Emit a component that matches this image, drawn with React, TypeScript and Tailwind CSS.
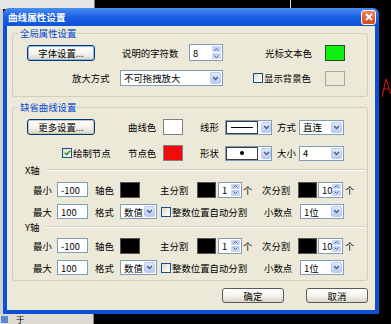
import type { ReactNode } from 'react';

type P = { className?: string; children?: ReactNode };

function Txt({ className = '', children }: P) {
    return <span className={`shrink-0 whitespace-nowrap leading-[12px] ${className}`}>{children}</span>;
}

function Chevron() {
    return (
        <svg width="7" height="5" viewBox="0 0 7 5">
            <path d="M1 1 L3.5 3.5 L6 1" fill="none" stroke="#4d6185" strokeWidth="1.5" />
        </svg>
    );
}

function XpButton({ className = '', children }: P) {
    return (
        <div className={`flex shrink-0 items-center justify-center rounded-[3px] border border-[#003c74] bg-linear-to-b from-white via-[#f5f4ef] to-[#d9d5c8] leading-[12px] ${className}`}>
            {children}
        </div>
    );
}

function Select({ className = '', value }: { className?: string; value: string }) {
    return (
        <div className={`flex shrink-0 items-stretch border border-[#7f9db9] bg-white p-[1px] ${className}`}>
            <span className="flex flex-1 items-center pl-[2px] leading-[12px] whitespace-nowrap">{value}</span>
            <span className="flex w-[11px] items-center justify-center rounded-[2px] border border-[#b9cbf3] bg-linear-to-b from-[#e1eafd] to-[#b7cbf7]">
                <Chevron />
            </span>
        </div>
    );
}

function Spin({ className = '', value }: { className?: string; value: string }) {
    return (
        <div className={`flex shrink-0 items-stretch border border-[#7f9db9] bg-white p-[1px] ${className}`}>
            <span className="flex flex-1 items-center pl-[2px] leading-[12px]">{value}</span>
            <span className="flex w-[9px] flex-col gap-[1px]">
                <span className="flex flex-1 items-center justify-center rounded-[1px] bg-[#c6d4f7]">
                    <svg width="5" height="3" viewBox="0 0 5 3">
                        <path d="M0.5 2.5 L2.5 0.5 L4.5 2.5" fill="none" stroke="#4d6185" strokeWidth="1" />
                    </svg>
                </span>
                <span className="flex flex-1 items-center justify-center rounded-[1px] bg-[#c6d4f7]">
                    <svg width="5" height="3" viewBox="0 0 5 3">
                        <path d="M0.5 0.5 L2.5 2.5 L4.5 0.5" fill="none" stroke="#4d6185" strokeWidth="1" />
                    </svg>
                </span>
            </span>
        </div>
    );
}

function TextBox({ className = '', value }: { className?: string; value: string }) {
    return (
        <div className={`flex shrink-0 items-center border border-[#7f9db9] bg-white pl-[3px] leading-[12px] ${className}`}>
            {value}
        </div>
    );
}

function StyleCombo({ children }: P) {
    return (
        <div className="flex h-[15px] w-[47px] shrink-0 items-stretch gap-[3px] border border-[#7f9db9] bg-white">
            <span className="flex w-[33px] items-center justify-center border border-[#3a3a3a]">{children}</span>
            <span className="my-[1px] flex w-[10px] items-center justify-center rounded-[2px] border border-[#b9cbf3] bg-linear-to-b from-[#e1eafd] to-[#b7cbf7]">
                <Chevron />
            </span>
        </div>
    );
}

function Check({ checked = false, className = '' }: { checked?: boolean; className?: string }) {
    return (
        <span className={`flex h-[10px] w-[10px] shrink-0 items-center justify-center border border-[#1c5180] bg-linear-to-br from-[#dcdcd7] to-white ${className}`}>
            {checked && (
                <svg width="7" height="6" viewBox="0 0 7 6">
                    <path d="M0.8 2.8 L2.6 4.6 L6.2 0.8" fill="none" stroke="#21a121" strokeWidth="1.6" />
                </svg>
            )}
        </span>
    );
}

function Group({ label, className = '', children }: { label: string; className?: string; children: ReactNode }) {
    return (
        <div className={`relative ml-[5px] mr-[7px] rounded-[3px] border border-[#d0d0bf] ${className}`}>
            <span className="absolute left-[6px] top-[-7px] bg-[#ece9d8] px-[1px] leading-[12px] text-[#0046d5]">{label}</span>
            {children}
        </div>
    );
}

function AxisSep({ label }: { label: string }) {
    return (
        <div className="flex h-[12px] items-center">
            <Txt className="ml-[12px] w-[18px]">{label}</Txt>
            <span className="ml-[3px] mr-[2px] h-[2px] flex-1 border-t border-b border-t-[#d0d0bf] border-b-white" />
        </div>
    );
}

function AxisRows() {
    return (
        <>
            <div className="mt-[6px] flex h-[15px] items-center">
                <Txt className="ml-[20px] w-[18px]">最小</Txt>
                <TextBox className="ml-[6px] h-[15px] w-[31px]" value="-100" />
                <Txt className="ml-[7px] w-[18px]">轴色</Txt>
                <span className="ml-[7px] h-[16px] w-[20px] shrink-0 border border-[#555] bg-black" />
                <Txt className="ml-[20px] w-[29px]">主分割</Txt>
                <span className="ml-[8px] h-[16px] w-[19px] shrink-0 border border-[#555] bg-black" />
                <Spin className="ml-[2px] h-[16px] w-[24px]" value="1" />
                <Txt className="ml-[1px] w-[10px]">个</Txt>
                <Txt className="ml-[9px] w-[28px]">次分割</Txt>
                <span className="ml-[8px] h-[16px] w-[19px] shrink-0 border border-[#555] bg-black" />
                <Spin className="ml-[1px] h-[16px] w-[25px]" value="10" />
                <Txt className="ml-[2px] w-[10px]">个</Txt>
            </div>
            <div className="mt-[7px] flex h-[15px] items-center">
                <Txt className="ml-[20px] w-[18px]">最大</Txt>
                <TextBox className="ml-[6px] h-[15px] w-[31px]" value="100" />
                <Txt className="ml-[7px] w-[18px]">格式</Txt>
                <Select className="ml-[7px] h-[15px] w-[37px]" value="数值" />
                <Check className="ml-[4px]" />
                <Txt className="ml-[1px] w-[76px]">整数位置自动分割</Txt>
                <Txt className="ml-[16px] w-[28px]">小数点</Txt>
                <Select className="ml-[8px] h-[15px] w-[44px]" value="1位" />
            </div>
        </>
    );
}

export default function App() {
    return (
        <div className="relative h-[324px] w-[391px] overflow-hidden bg-black font-['Noto_Sans_CJK_SC','Liberation_Sans',sans-serif] text-[9.4px] text-black">
            {/* windows behind the dialog */}
            <div className="absolute left-0 top-0 h-[9px] w-[95px] border-r border-[#777] bg-[#e6e6e6]" />
            <div className="absolute left-[290px] top-0 h-[9px] w-px bg-[#d8d8d8]" />
            <div className="absolute left-0 top-[9px] h-[305px] w-[3px] bg-[#cfcfcf]" />
            <div className="absolute left-0 top-[314px] flex h-[10px] w-[94px] items-start border-r border-[#888] bg-[#dedcd2] pt-px">
                <span className="ml-[1px] mt-px h-[7px] w-[7px] bg-[#5b88d6]" />
                <span className="ml-[8px] text-[8.5px] leading-[9px]">于</span>
            </div>
            <svg className="absolute left-[381px] top-[76px]" width="10" height="22" viewBox="0 0 10 22">
                <path d="M1 21 L5 3 L10 18 M3 13 L8 13" fill="none" stroke="#d81818" strokeWidth="1" />
            </svg>

            {/* dialog */}
            <div className="absolute left-[3px] top-[8px] flex h-[306px] w-[376px] flex-col">
                <div className="flex h-[18px] shrink-0 items-center rounded-t-[6px] bg-linear-to-b from-[#4a8cf0] via-[#1a5fe2] to-[#0c54d6] pl-[5px] pr-[3px]">
                    <span className="text-[9.6px] leading-[12px] font-bold text-white">曲线属性设置</span>
                    <span className="ml-auto flex h-[15px] w-[15px] items-center justify-center rounded-[3px] border border-white bg-linear-to-b from-[#f0845c] to-[#d4451d]">
                        <svg width="8" height="8" viewBox="0 0 8 8">
                            <path d="M1 1 L7 7 M7 1 L1 7" stroke="white" strokeWidth="1.8" />
                        </svg>
                    </span>
                </div>
                <div className="flex flex-1 flex-col border-x-4 border-b-4 border-[#0a4fd6] bg-[#ece9d8]">
                    <Group label="全局属性设置" className="mt-[7px] h-[64px] pt-[10px]">
                        <div className="flex h-[17px] items-center">
                            <XpButton className="ml-[14px] h-[16px] w-[68px] border-[#1f3f78] shadow-[inset_0_0_0_1px_#98b4e4]">字体设置...</XpButton>
                            <Txt className="ml-[27px] w-[56px]">说明的字符数</Txt>
                            <Spin className="ml-[11px] h-[17px] w-[34px]" value="8" />
                            <Txt className="ml-[42px] w-[47px]">光标文本色</Txt>
                            <span className="ml-[13px] h-[16px] w-[20px] shrink-0 border border-[#2b4d2b] bg-[#10f010]" />
                        </div>
                        <div className="mt-[9px] flex h-[16px] items-center">
                            <Txt className="ml-[59px] w-[37px]">放大方式</Txt>
                            <Select className="ml-[11px] h-[16px] w-[103px]" value="不可拖拽放大" />
                            <Check className="ml-[30px]" />
                            <Txt className="ml-[1px] w-[47px]">显示背景色</Txt>
                            <span className="ml-[14px] h-[15px] w-[20px] shrink-0 border border-[#a8a8a0] bg-[#ece9d8]" />
                        </div>
                    </Group>

                    <Group label="缺省曲线设置" className="mt-[10px] h-[174px] pt-[11px]">
                        <div className="flex h-[16px] items-center">
                            <XpButton className="ml-[14px] h-[16px] w-[68px] border-[#1f3f78] shadow-[inset_0_0_0_1px_#c9c6b8]">更多设置...</XpButton>
                            <Txt className="ml-[33px] w-[28px]">曲线色</Txt>
                            <span className="ml-[7px] h-[16px] w-[20px] shrink-0 border border-[#808080] bg-white" />
                            <Txt className="ml-[17px] w-[19px]">线形</Txt>
                            <div className="ml-[6px]">
                                <StyleCombo>
                                    <span className="h-px w-[22px] bg-black" />
                                </StyleCombo>
                            </div>
                            <Txt className="ml-[5px] w-[19px]">方式</Txt>
                            <Select className="ml-[3px] h-[15px] w-[45px]" value="直连" />
                        </div>
                        <div className="mt-[10px] flex h-[16px] items-center">
                            <Check checked className="ml-[49px]" />
                            <Txt className="ml-[1px] w-[38px]">绘制节点</Txt>
                            <Txt className="ml-[17px] w-[28px]">节点色</Txt>
                            <span className="ml-[7px] h-[16px] w-[20px] shrink-0 border border-[#808080] bg-[#f00c0c]" />
                            <Txt className="ml-[17px] w-[19px]">形状</Txt>
                            <div className="ml-[6px]">
                                <StyleCombo>
                                    <span className="h-[4px] w-[4px] rounded-full bg-black" />
                                </StyleCombo>
                            </div>
                            <Txt className="ml-[5px] w-[19px]">大小</Txt>
                            <Select className="ml-[3px] h-[15px] w-[45px]" value="4" />
                        </div>
                        <div className="mt-[3px]">
                            <AxisSep label="X轴" />
                        </div>
                        <AxisRows />
                        <div className="mt-[2px]">
                            <AxisSep label="Y轴" />
                        </div>
                        <div className="-mt-px">
                            <AxisRows />
                        </div>
                    </Group>

                    <div className="mt-[7px] flex justify-end gap-[22px] pr-[7px]">
                        <XpButton className="h-[15px] w-[62px] border-[#5a5a5a]">确定</XpButton>
                        <XpButton className="h-[15px] w-[62px] border-[#5a5a5a]">取消</XpButton>
                    </div>
                </div>
            </div>
        </div>
    );
}
